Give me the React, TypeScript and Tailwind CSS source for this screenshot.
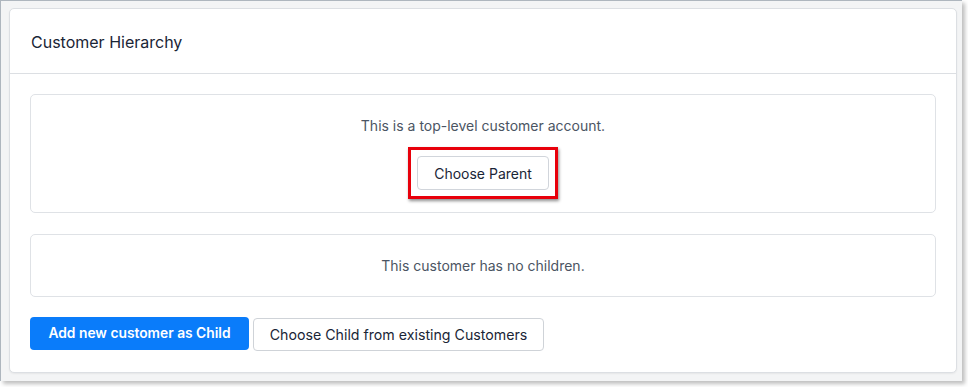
export default function App() {
  return (
    <div className="w-[968px] h-[387px] bg-white" style={{ fontFamily: 'Inter, "Liberation Sans", sans-serif' }}>
      <div className="w-[962px] h-[381px] bg-[#f3f4f5] border-l border-t border-[#aeb6be] shadow-[3px_3px_4px_rgba(0,0,0,0.25)] pt-[7px] pl-[8px]">
        <div className="w-[948px] h-[365px] bg-white border border-[#dcdfe3] rounded-[5px] shadow-[0_1px_2px_rgba(0,0,0,0.06)] flex flex-col">
          <div className="h-[65px] flex items-center px-[21px] border-b border-[#dcdfe3]">
            <h2 className="text-[16px] text-[#1a2536] mt-[2px]">Customer Hierarchy</h2>
          </div>
          <div className="px-[20px] pt-[20px] flex flex-col">
            <div className="h-[119px] border border-[#dfe2e6] rounded-[5px] flex flex-col items-center pt-[21px]">
              <p className="text-[14px] text-[#4b5563] leading-[20px]">This is a top-level customer account.</p>
              <div className="mt-[11px] border-[3px] border-[#e8000b] p-[6px] shadow-[1px_2px_3px_rgba(0,0,0,0.45)]">
                <button className="h-[34px] w-[132px] bg-white border border-[#d1d5db] rounded-[4px] text-[14px] text-[#1a2536]">
                  Choose Parent
                </button>
              </div>
            </div>
            <div className="mt-[21px] h-[63px] border border-[#dfe2e6] rounded-[5px] flex items-center justify-center">
              <p className="text-[14px] text-[#4b5563]">This customer has no children.</p>
            </div>
            <div className="mt-[20px] flex gap-[4px]">
              <button className="h-[33px] w-[219px] bg-[#0a7cfa] rounded-[4px] text-[13.8px] font-semibold text-white">
                Add new customer as Child
              </button>
              <button className="h-[33px] mt-[1px] w-[291px] bg-white border border-[#cfd3d8] rounded-[4px] text-[14.2px] text-[#1a2536]">
                Choose Child from existing Customers
              </button>
            </div>
          </div>
        </div>
      </div>
    </div>
  )
}
